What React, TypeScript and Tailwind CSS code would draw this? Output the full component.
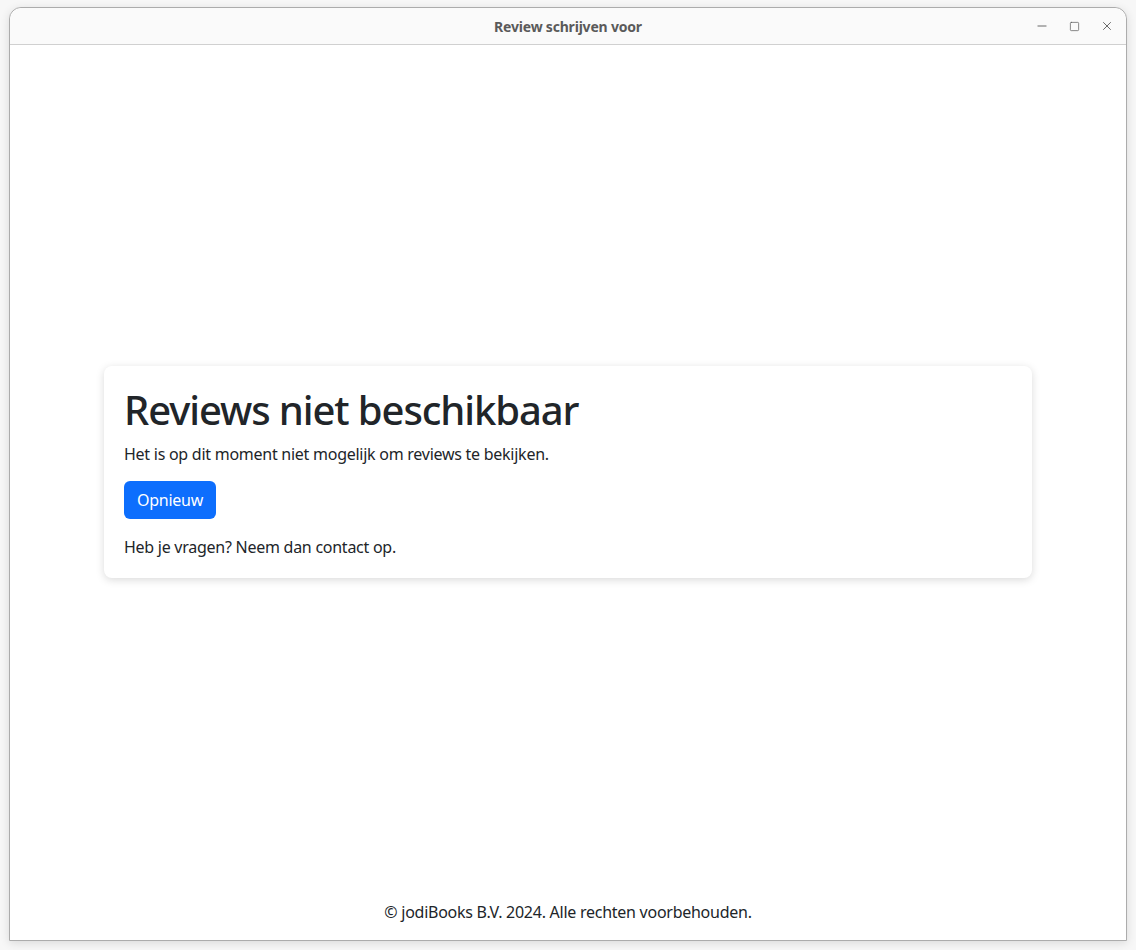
import { Minus, Square, X } from "lucide-react";

const font = { fontFamily: '"Noto Sans", "Open Sans", sans-serif' };

function TitleBar() {
  return (
    <div className="relative flex h-[37px] shrink-0 items-center justify-center rounded-t-[12px] border-b border-[#d0d0d0] bg-[#fafafa]">
      <span className="text-[14px] font-bold tracking-[-0.2px] text-[#5a5a5a]">Review schrijven voor</span>
      <div className="absolute right-[12px] top-0 flex h-full items-center gap-[20px] text-[#555]">
        <Minus className="h-[14px] w-[14px]" strokeWidth={1.5} />
        <Square className="h-[11px] w-[11px]" strokeWidth={1.5} />
        <X className="h-[14px] w-[14px]" strokeWidth={1.5} />
      </div>
    </div>
  );
}

export default function App() {
  return (
    <div className="h-[950px] w-full bg-[#f7f7f7] pl-[9px] pt-[7px]" style={font}>
      <div className="flex h-[934px] w-[1118px] flex-col overflow-hidden rounded-t-[12px] border border-[#acacac] bg-white shadow-[0_2px_10px_rgba(0,0,0,0.12)]">
        <TitleBar />
        <main className="flex flex-1 items-center justify-center px-[94px]">
          <div className="w-[928px] rounded-[8px] bg-white px-[20px] pt-[20px] pb-[19px] text-[#212529] shadow-[0_2px_8px_rgba(0,0,0,0.15)]">
            <h1 className="mb-[8px] text-[40px] font-medium leading-[48px] tracking-[-1.1px]">Reviews niet beschikbaar</h1>
            <p className="mb-[15px] text-[16px] leading-[24px] tracking-[-0.26px]">Het is op dit moment niet mogelijk om reviews te bekijken.</p>
            <button className="rounded-[6px] bg-[#0d6efd] px-[13px] py-[6px] text-[16px] leading-[26px] tracking-[-0.26px] text-white">
              Opnieuw
            </button>
            <p className="mt-[16px] text-[16px] leading-[24px] tracking-[-0.26px]">Heb je vragen? Neem dan contact op.</p>
          </div>
        </main>
        <footer className="flex h-[42px] shrink-0 items-start justify-center pt-[2px] text-[16px] leading-[24px] tracking-[-0.26px] text-[#212529]">
          © jodiBooks B.V. 2024. Alle rechten voorbehouden.
        </footer>
      </div>
    </div>
  );
}
